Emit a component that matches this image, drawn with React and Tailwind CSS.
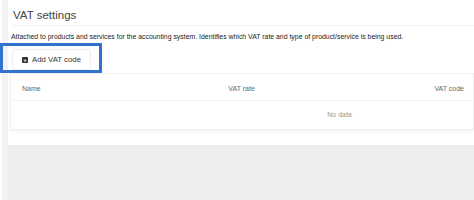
export default function App() {
  return (
    <div className="w-[474px] h-[200px] bg-[#ededed] overflow-hidden flex" style={{ fontFamily: "'Liberation Sans', Arial, sans-serif" }}>
      <div className="w-[8px] bg-[#f3f3f3] border-l-2 border-white shrink-0" />
      <div className="flex-1 flex flex-col">
        <div className="bg-white h-[145px] relative">
          <div className="pl-[5px] pt-[8px]">
            <h1 className="text-[11.5px] text-[#444] leading-[14px]">VAT settings</h1>
            <div className="mt-[3px] border-t border-[#f0f0f0]" />
            <p className="mt-[6px] -ml-[2px] text-[6.9px] text-[#222] leading-[10px]">
              Attached to products and services for the accounting system. Identifies which VAT rate and type of product/service is being used.
            </p>
          </div>
          <div className="px-[2px] pt-[7px]">
            <button className="ml-[2px] h-[21px] px-[9px] flex items-center gap-[4px] bg-white border border-[#eeeeee] rounded-[2px] text-[7.8px] font-medium text-[#333]">
              <span className="w-[6px] h-[6px] bg-[#333] rounded-[1px] flex items-center justify-center text-white text-[6px] leading-none font-bold">+</span>
              Add VAT code
            </button>
          </div>
          <div className="ml-[2px] mt-[3px] border border-[#f0f0f0] shadow-[0_2px_2px_rgba(0,0,0,0.04)]">
            <div className="grid grid-cols-3 h-[27px] pt-[4px] items-center border-b border-[#f3f3f3] pl-[11px] pr-[9px] text-[7px] text-[#666]">
              <span>Name</span>
              <span className="pl-[59px]">VAT rate</span>
              <span className="text-right">VAT code</span>
            </div>
            <div className="h-[28px] flex items-center justify-center text-[7px] text-[#999] pl-[195px]">No data</div>
          </div>
          <div className="absolute left-[-8px] top-[43px] w-[102px] h-[30px] border-[3px] border-[#2f73cc]" />
        </div>
      </div>
    </div>
  );
}
